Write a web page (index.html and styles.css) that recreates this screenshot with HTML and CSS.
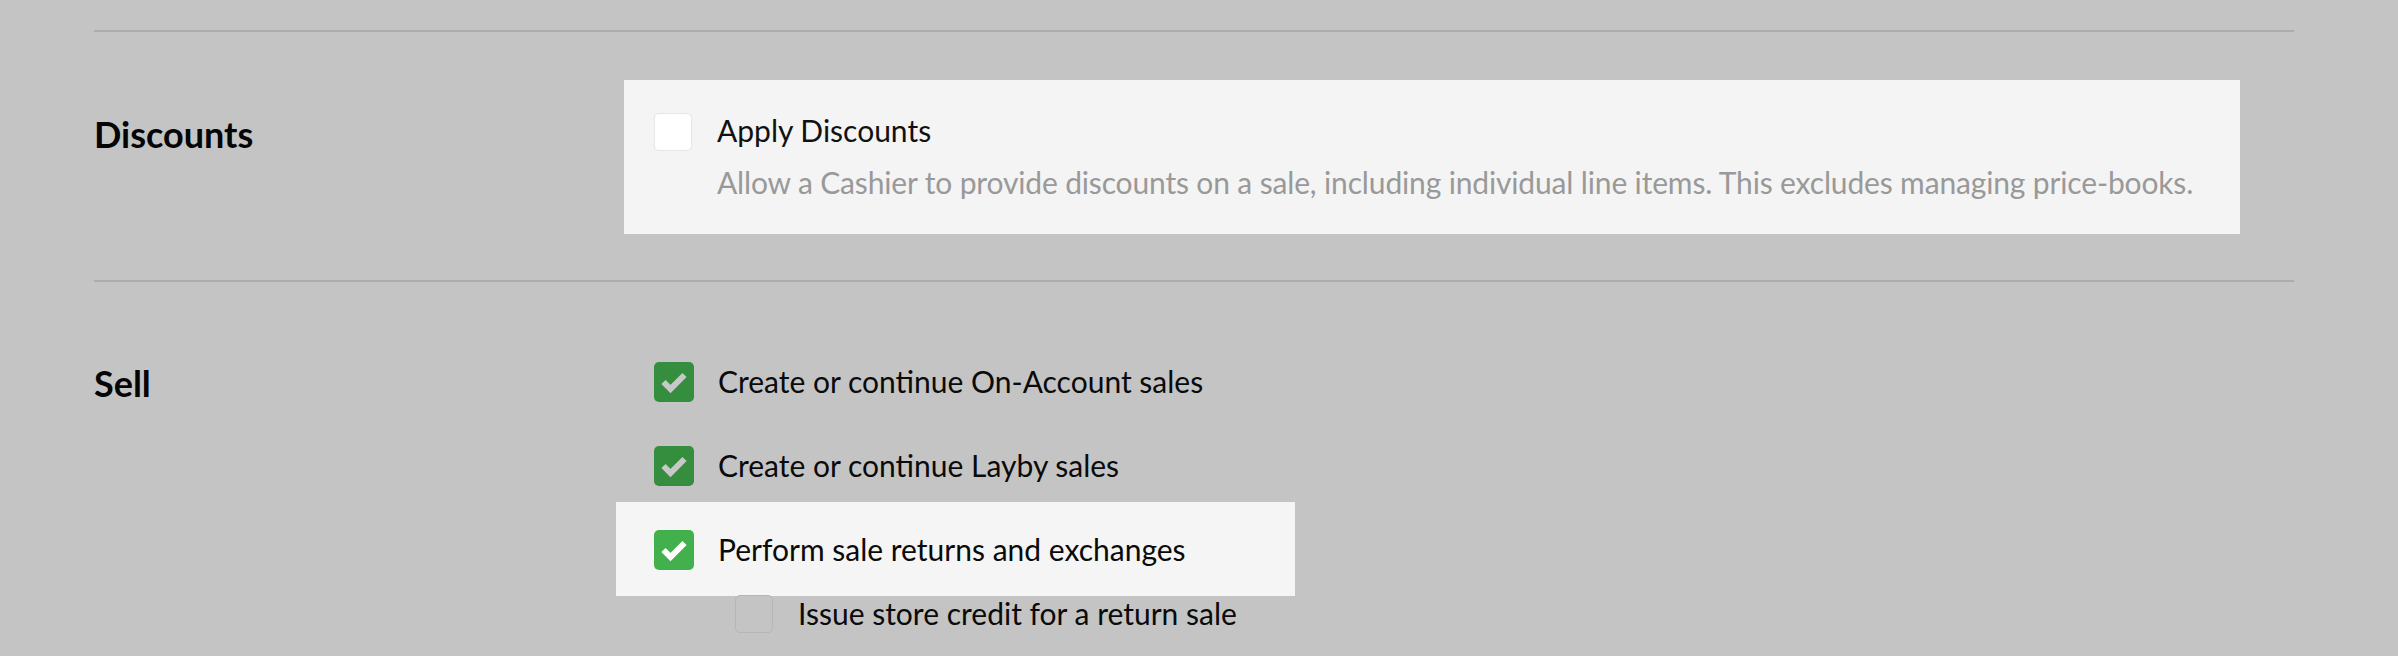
FILE: index.html
```html
<!DOCTYPE html>
<html lang="en">
<head>
<meta charset="utf-8">
<title>Permissions</title>
<link rel="stylesheet" href="styles.css">
</head>
<body>
<div class="page">
  <section class="section section-discounts">
    <h2 class="section-title">Discounts</h2>
    <div class="section-body">
      <div class="panel">
        <div class="option">
          <span class="check check-empty check-light"></span>
          <div class="option-text">
            <div class="option-label">Apply Discounts</div>
            <div class="option-desc">Allow a Cashier to provide discounts on a sale, including individual line items. This excludes managing price-books.</div>
          </div>
        </div>
      </div>
    </div>
  </section>

  <section class="section section-sell">
    <h2 class="section-title">Sell</h2>
    <div class="section-body rows">
      <div class="row">
        <span class="check check-on check-dim">
          <svg viewBox="0 0 40 40" class="tick"><polyline points="9.5,20 16.5,27 30.5,13"/></svg>
        </span>
        <span class="row-label">Create or continue On-Account sales</span>
      </div>
      <div class="row">
        <span class="check check-on check-dim">
          <svg viewBox="0 0 40 40" class="tick"><polyline points="9.5,20 16.5,27 30.5,13"/></svg>
        </span>
        <span class="row-label">Create or continue Layby sales</span>
      </div>
      <div class="row row-spot">
        <span class="check check-on">
          <svg viewBox="0 0 40 40" class="tick"><polyline points="9.5,20 16.5,27 30.5,13"/></svg>
        </span>
        <span class="row-label">Perform sale returns and exchanges</span>
      </div>
      <div class="row row-sub">
        <span class="check check-empty check-dimbox"></span>
        <span class="row-label">Issue store credit for a return sale</span>
      </div>
    </div>
  </section>
</div>
</body>
</html>
```

FILE: styles.css
```css
html, body {
  margin: 0;
  padding: 0;
}

body {
  background: #c4c4c4;
  font-family: Lato, "Open Sans", "Liberation Sans", sans-serif;
  color: #111;
  overflow: hidden;
}

.page {
  margin-left: 94px;
  width: 2200px;
  padding-top: 30px;
}

.section {
  border-top: 2px solid #acacac;
  display: grid;
  grid-template-columns: 530px 1fr;
  padding-top: 48px;
}

.section-discounts {
  padding-bottom: 46px;
}

.section-title {
  margin: 0;
  font-size: 36px;
  line-height: 43px;
  font-weight: 700;
  color: #050505;
}

.section-discounts .section-title {
  padding-top: 33px;
}

.section-sell .section-title {
  padding-top: 32px;
}

.panel {
  background: #f4f4f4;
  padding: 33px 30px;
  margin-right: 54px;
}

.option {
  display: flex;
  gap: 25px;
  align-items: flex-start;
}

.option-text {
  font-size: 30px;
  line-height: 38px;
  min-width: 0;
}

.option-label {
  color: #111;
  margin-top: -2px;
  padding-bottom: 2px;
}

.option-desc {
  margin-top: 12px;
  color: #999;
  white-space: nowrap;
  letter-spacing: -0.15px;
}

.check {
  flex: none;
  display: block;
  box-sizing: border-box;
}

.check-empty {
  width: 38px;
  height: 38px;
  border-radius: 5px;
}

.check-light {
  background: #fff;
  border: 1px solid #e6e6e6;
}

.check-dimbox {
  background: #c4c4c4;
  border: 1px solid #b6b6b6;
  margin: 0 1px;
}

.check-on {
  width: 40px;
  height: 40px;
  border-radius: 5px;
  background: #43b04e;
}

.check-on.check-dim {
  background: #358d3e;
}

.tick {
  display: block;
  width: 40px;
  height: 40px;
}

.tick polyline {
  fill: none;
  stroke: #fff;
  stroke-width: 6;
  stroke-linecap: butt;
  stroke-linejoin: miter;
}

.check-dim .tick polyline {
  stroke: #c8c8c8;
}

.rows {
  padding-top: 32px;
  padding-left: 30px;
}

.row {
  display: flex;
  align-items: center;
  gap: 24px;
  height: 40px;
  margin-bottom: 44px;
}

.row-label {
  font-size: 30px;
  line-height: 40px;
  color: #0a0a0a;
  padding-bottom: 3px;
  white-space: nowrap;
}

.row-spot {
  box-sizing: content-box;
  background: #f5f5f5;
  width: 641px;
  margin-left: -38px;
  padding: 28px 0 26px 38px;
  margin-top: -28px;
  margin-bottom: 0;
}

.row-sub {
  margin-top: -2px;
  padding-left: 80px;
}
```
